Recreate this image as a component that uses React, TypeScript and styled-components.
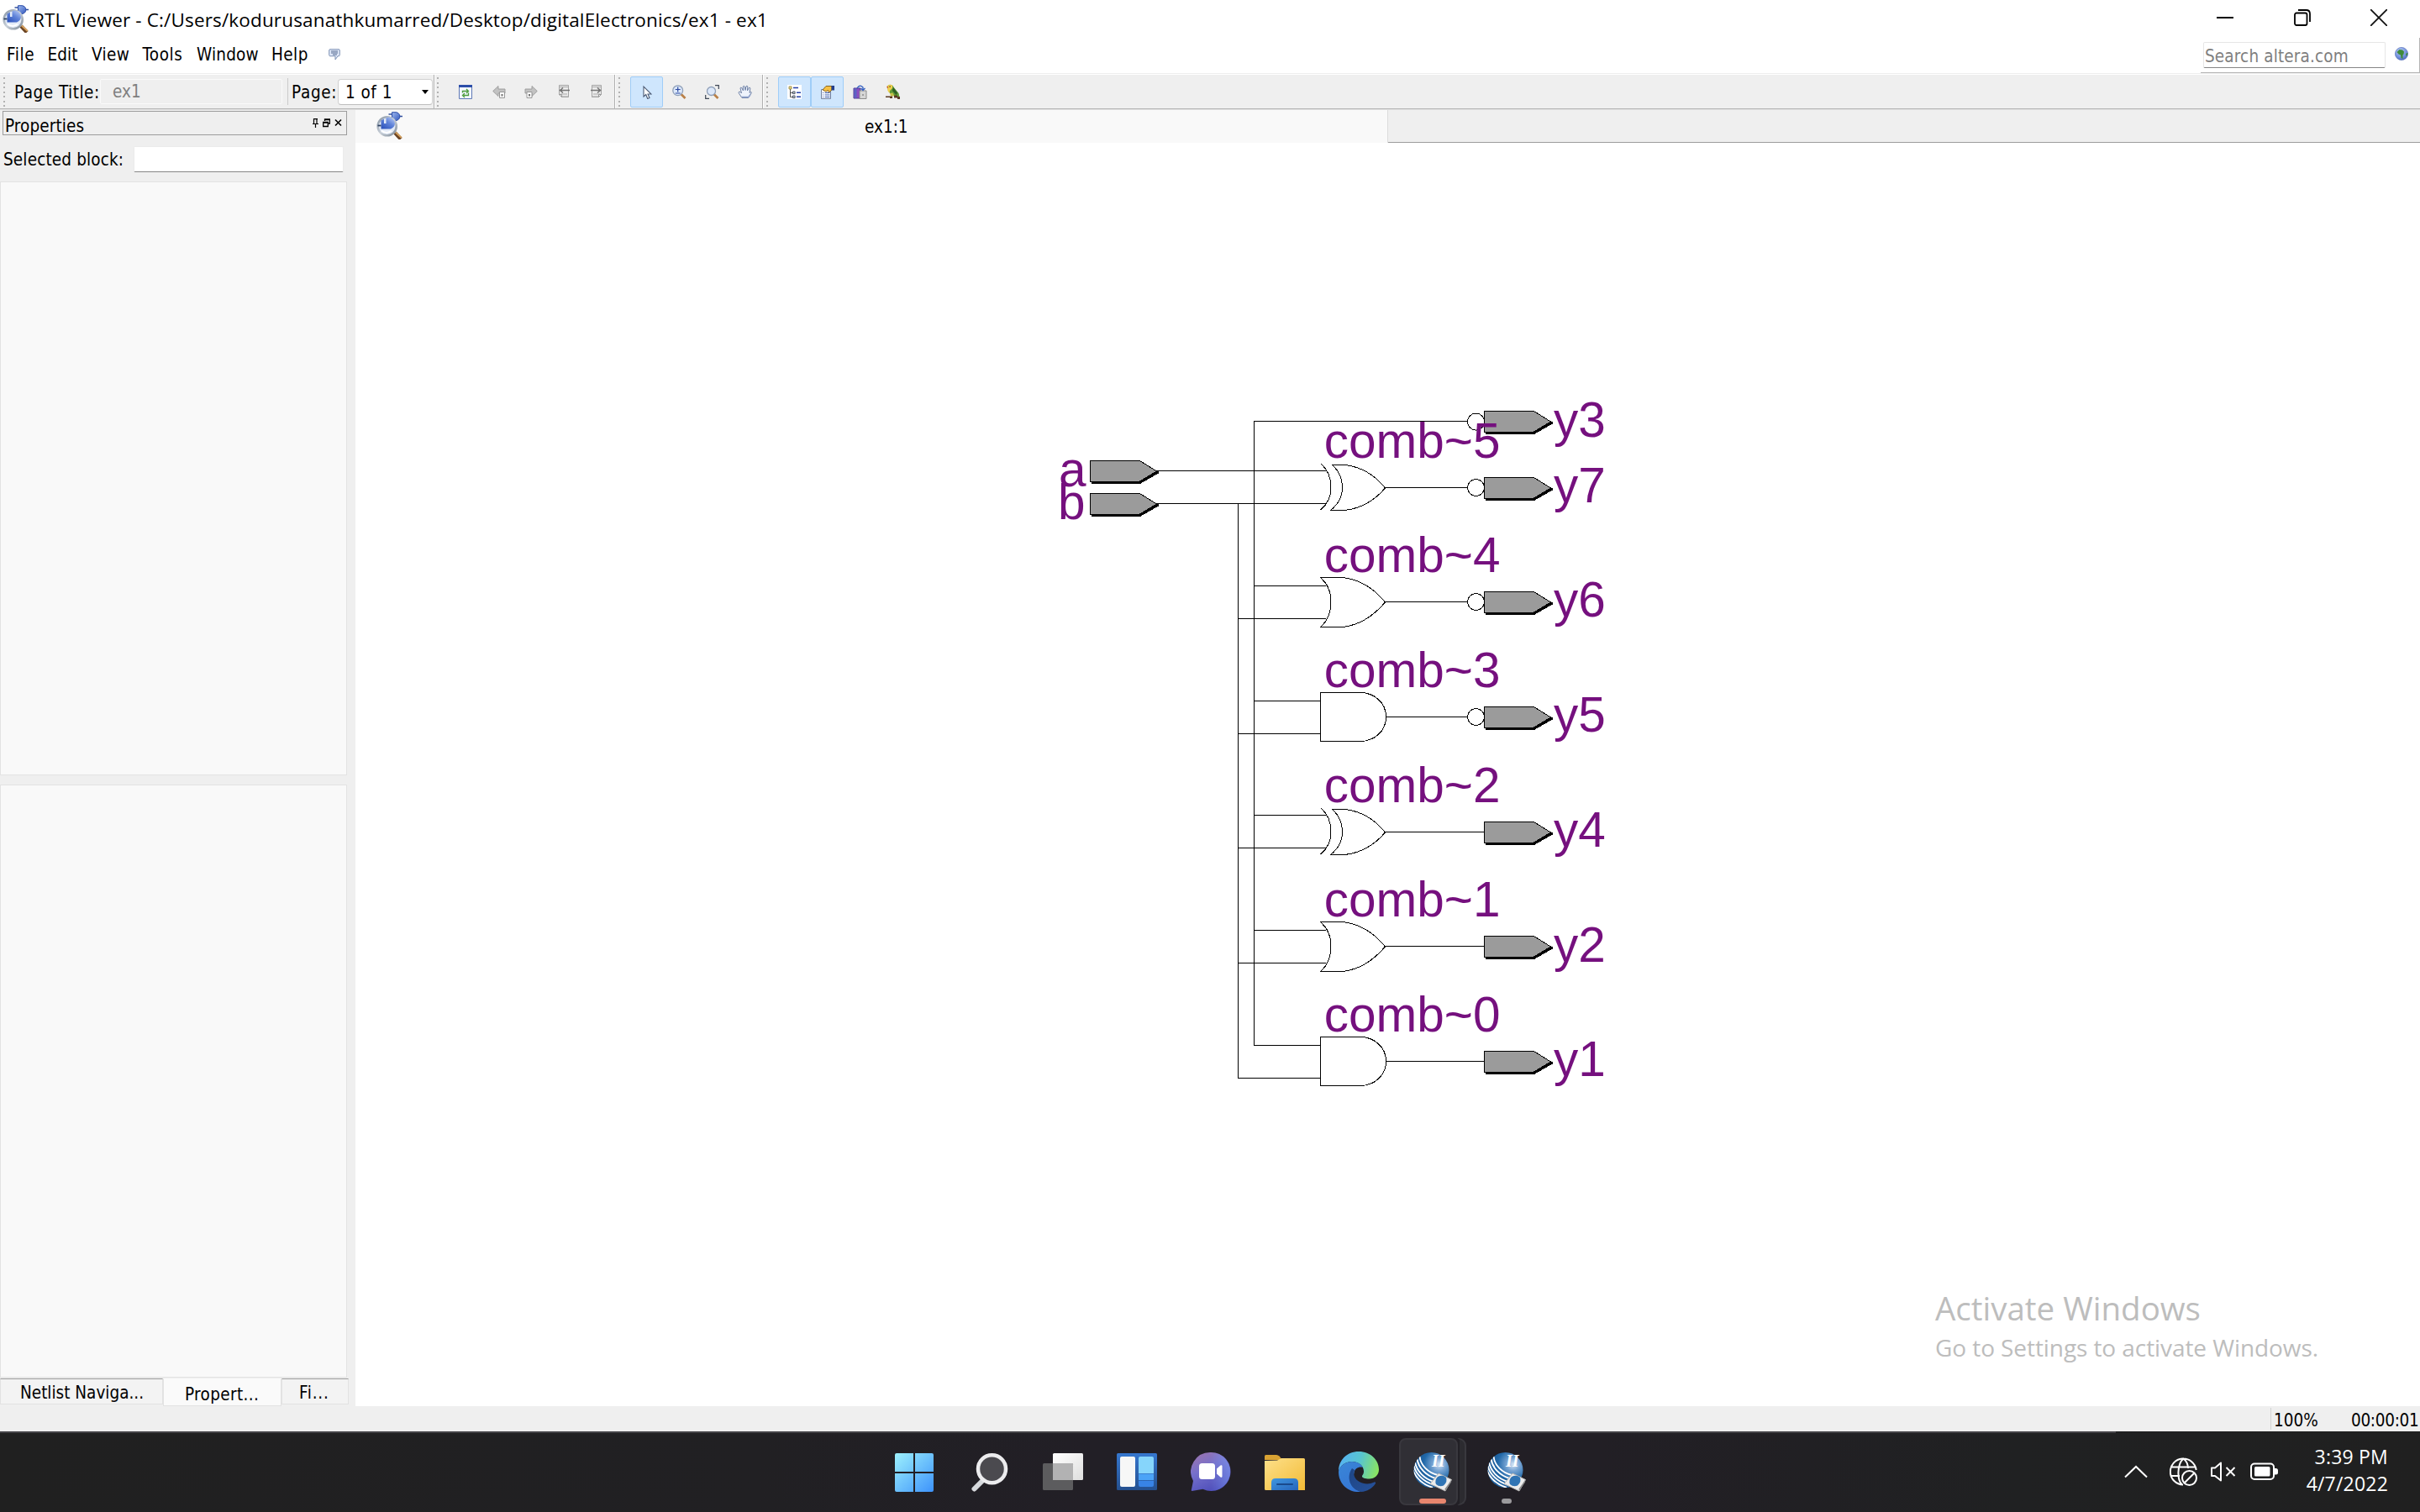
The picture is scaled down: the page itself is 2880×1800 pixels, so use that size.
import React from 'react';
import styled, { createGlobalStyle, css } from 'styled-components';

const GlobalStyle = createGlobalStyle`
  *, *::before, *::after { box-sizing: border-box; }
  body { margin: 0; background: #fff; overflow: hidden; }
`;

const uiFont = '"DejaVu Sans Condensed", "DejaVu Sans", sans-serif';
const shellFont = '"Open Sans", "Noto Sans", sans-serif';

const Screen = styled.div`
  width: 2880px;
  height: 1800px;
  display: flex;
  flex-direction: column;
  background: #fff;
  color: #000;
  font-family: ${uiFont};
  font-size: 20.5px;
  white-space: pre;
`;

const Label = styled.span<{ $track?: number; $color?: string }>`
  letter-spacing: ${(p) => p.$track ?? 0}px;
  color: ${(p) => p.$color ?? '#000'};
  line-height: 24px;
`;

/* ---------- title bar and menu ---------- */

const TitleBar = styled.header`
  height: 45px;
  display: flex;
  padding-left: 3px;
`;

const TitleIcon = styled.div`
  width: 36px;
  padding-top: 6px;
`;

const TitleText = styled.div`
  flex: 1;
  padding-top: 2px;
  font-family: ${shellFont};
  font-size: 22.5px;
  line-height: 43px;
  letter-spacing: 0.15px;
`;

const WindowButtons = styled.div`
  display: flex;
  width: 288px;
  height: 42px;
`;

const WindowButton = styled.div<{ $w: number }>`
  width: ${(p) => p.$w}px;
  display: flex;
  align-items: center;
  justify-content: center;
`;

const MenuBar = styled.nav`
  height: 42px;
  display: flex;
  padding-left: 8px;
`;

const MenuItems = styled.div`
  flex: 1;
  display: flex;
  align-items: center;
  padding-bottom: 3px;
`;

const MenuItem = styled.div<{ $w: number; $track: number }>`
  width: ${(p) => p.$w}px;
  letter-spacing: ${(p) => p.$track}px;
  line-height: 24px;
`;

const SearchArea = styled.div`
  width: 261px;
  display: flex;
  padding: 5px 0 0 3px;
  border-right: 1px solid #b4b4b4;
  border-bottom: 1px solid #b4b4b4;
`;

const SearchBox = styled.div`
  width: 217px;
  height: 31px;
  padding: 2px 0 0 1px;
  border: 1px solid #e6e6e6;
  border-bottom-color: #868686;
  border-radius: 2px;
  line-height: 28px;
`;

const SearchGlobe = styled.div`
  padding: 6px 0 0 11px;
  line-height: 0;
`;

/* ---------- toolbar ---------- */

const ToolBar = styled.div`
  height: 44px;
  display: flex;
  background: #efefef;
  border-top: 1px solid #eeeeee;
  border-bottom: 1px solid #e2e2e2;
  box-shadow: inset 0 1px 0 #fff, inset 0 -1px 0 #b4b4b4;
`;

const ToolGroup = styled.div<{ $w: number; $last?: boolean }>`
  width: ${(p) => p.$w}px;
  display: flex;
  align-items: center;
  margin: 1px 0;
  ${(p) =>
    !p.$last &&
    css`
      border-right: 1px solid #fff;
      box-shadow: inset -1px 0 0 #b0b0b0;
    `}
`;

const Grip = styled.div<{ $left: number; $right: number }>`
  width: 2px;
  height: 35px;
  flex: none;
  margin: 0 ${(p) => p.$right}px 0 ${(p) => p.$left}px;
  background: repeating-linear-gradient(#b2b2b2 0 2px, transparent 2px 5.5px);
`;

const ToolLabel = styled.div<{ $w: number; $track: number }>`
  width: ${(p) => p.$w}px;
  flex: none;
  padding-top: 1px;
  letter-spacing: ${(p) => p.$track}px;
  line-height: 24px;
`;

const PageTitleField = styled.div`
  width: 217px;
  height: 30px;
  flex: none;
  margin-right: 6px;
  padding-left: 14px;
  border: 1px solid #fafafa;
  border-radius: 2px;
  line-height: 29px;
`;

const Separator = styled.div`
  width: 1px;
  height: 32px;
  flex: none;
  background: #cacaca;
  margin-right: 4px;
`;

const PageSelect = styled.div`
  width: 113px;
  height: 31px;
  flex: none;
  display: flex;
  align-items: center;
  justify-content: space-between;
  padding: 1px 4px 0 8px;
  background: #fff;
  border: 1px solid #d0d0d0;
  border-bottom-color: #bdbdbd;
  border-radius: 4px;
`;

const Arrow = styled.div`
  border: 4px solid transparent;
  border-top: 5px solid #000;
  border-bottom: 0;
`;

const ToolButton = styled.div<{ $w: number; $on?: boolean }>`
  width: ${(p) => p.$w}px;
  height: 37px;
  flex: none;
  display: flex;
  align-items: center;
  justify-content: center;
  border: 1px solid ${(p) => (p.$on ? '#9fcdf8' : 'transparent')};
  border-radius: 2px;
  background: ${(p) => (p.$on ? '#cfe6fd' : 'transparent')};
`;

/* ---------- work area ---------- */

const WorkArea = styled.main`
  height: 1543px;
  display: flex;
  background: #efefef;
`;

const Dock = styled.aside`
  width: 423px;
  padding-top: 1px;
  display: flex;
  flex-direction: column;
`;

const DockTitle = styled.div`
  width: 410px;
  height: 29px;
  margin-left: 3px;
  padding: 0 5px 0 2px;
  display: flex;
  justify-content: space-between;
  border: 1px solid #9c9c9c;
`;

const DockCaption = styled.div`
  padding-top: 5px;
  line-height: 25px;
`;

const DockButtons = styled.div`
  display: flex;
  gap: 5px;
  padding-top: 8px;
`;

const BlockRow = styled.div`
  height: 55px;
  display: flex;
  align-items: center;
  padding: 1px 0 0 4px;
`;

const BlockLabel = styled.div`
  width: 155px;
  padding-top: 1px;
  letter-spacing: 0.15px;
`;

const BlockField = styled.div`
  width: 250px;
  height: 31px;
  background: #fff;
  border: 1px solid #ebebeb;
  border-bottom-color: #868686;
  border-radius: 2px;
`;

const EmptyPane = styled.div<{ $h: number }>`
  width: 413px;
  height: ${(p) => p.$h}px;
  background: #f9f9f9;
  border: 1px solid #e3e3e3;
`;

const PaneGap = styled.div`
  height: 11px;
`;

const DockTabs = styled.div`
  width: 415px;
  height: 33px;
  margin-top: 1px;
  display: flex;
  align-items: flex-start;
`;

const DockTab = styled.div<{ $w: number; $pad: number; $on?: boolean }>`
  width: ${(p) => p.$w}px;
  height: ${(p) => (p.$on ? 33 : 31)}px;
  padding-left: ${(p) => p.$pad}px;
  line-height: ${(p) => (p.$on ? 36 : 33)}px;
  background: ${(p) => (p.$on ? '#fafafa' : '#f3f3f3')};
  border: 1px solid #e2e2e2;
  border-top: 1px solid ${(p) => (p.$on ? '#fafafa' : '#9c9c9c')};
`;

const Viewer = styled.section`
  flex: 1;
  display: flex;
  flex-direction: column;
`;

const ViewerTabs = styled.div`
  height: 39px;
  display: flex;
`;

const ViewerTab = styled.div`
  width: 1229px;
  display: flex;
  padding: 2px 0 0 25px;
  background: #f9f9f9;
  border-right: 1px solid #dcdcdc;
`;

const ViewerTabText = styled.div`
  margin-left: 549px;
  line-height: 37px;
`;

const ViewerTabRest = styled.div`
  flex: 1;
  border-bottom: 1px solid #9c9c9c;
`;

const Canvas = styled.div`
  position: relative;
  flex: 1;
  background: #fff;
`;

const Schematic = styled.svg`
  display: block;
  width: 2457px;
  height: 1504px;
  font-family: "Liberation Sans", Arial, sans-serif;
  font-size: 58.5px;
`;

const Watermark = styled.div`
  position: absolute;
  left: 1880px;
  top: 1358px;
  font-family: ${shellFont};
  color: #bdbdbd;
`;

const WatermarkTitle = styled.div`
  font-size: 38.5px;
  line-height: 58px;
`;

const WatermarkText = styled.div`
  font-size: 28px;
  line-height: 36px;
  letter-spacing: -0.08px;
`;

const StatusBar = styled.footer`
  height: 30px;
  display: flex;
  justify-content: flex-end;
  align-items: center;
  background: #efefef;
`;

const Zoom = styled.div`
  width: 96px;
  height: 26px;
  padding-left: 3px;
  border-left: 1px solid #d2d2d2;
  line-height: 30px;
`;

const Elapsed = styled.div`
  width: 82px;
  height: 26px;
  line-height: 30px;
  letter-spacing: -0.3px;
`;

/* ---------- taskbar ---------- */

const TaskBar = styled.footer`
  height: 96px;
  display: flex;
  background: linear-gradient(90deg, #202020 0, #212023 900px, #221f26 1300px, #221f25 1900px, #202122 2400px, #202020 2880px);
`;

const TaskEdge = styled.div`
  display: flex;
  width: 2518px;
  border-top: 2px solid #434246;
  padding-left: 1045px;
`;

const TaskButton = styled.div`
  position: relative;
  width: 88px;
  height: 94px;
  flex: none;
  display: flex;
  justify-content: center;
  padding-top: 22px;
`;

const ActiveBack = styled.div`
  position: absolute;
  left: 4px;
  top: 6px;
  width: 70px;
  height: 80px;
  border-radius: 8px;
  background: #302f35;
  border: 2px solid #39383e;
`;

const ActiveStack = styled.div`
  position: absolute;
  left: 73px;
  top: 6px;
  width: 11px;
  height: 80px;
  border-radius: 0 9px 9px 0;
  background: #2c2b30;
  border: 2px solid #39383e;
  border-left: 3px solid #222026;
`;

const Indicator = styled.div<{ $w: number; $color: string }>`
  position: absolute;
  left: ${(p) => 44 - p.$w / 2}px;
  top: 78px;
  width: ${(p) => p.$w}px;
  height: 6px;
  border-radius: 3px;
  background: ${(p) => p.$color};
`;

const TaskGlyph = styled.svg`
  position: relative;
  width: 48px;
  height: 48px;
`;

const Tray = styled.div`
  flex: 1;
  display: flex;
  align-items: center;
  padding-left: 9px;
`;

const TrayIcon = styled.div<{ $w: number }>`
  width: ${(p) => p.$w}px;
  flex: none;
  display: flex;
`;

const Clock = styled.div`
  width: 111px;
  padding-bottom: 4px;
  font-family: ${shellFont};
  font-size: 23px;
  line-height: 32px;
  letter-spacing: 0.2px;
  color: #fff;
  text-align: right;
`;

/* ---------- drawings ---------- */

const AppGlyph = () => (
  <svg width="32" height="33" viewBox="0 0 32 33">
    <defs>
      <linearGradient id="gateFill" x1="0" y1="0" x2="1" y2="1">
        <stop offset="0" stopColor="#9db8ee" />
        <stop offset="1" stopColor="#3458bd" />
      </linearGradient>
      <linearGradient id="ringFill" x1="0" y1="0" x2="1" y2="1">
        <stop offset="0" stopColor="#8795a5" />
        <stop offset="0.5" stopColor="#c9d0d8" />
        <stop offset="1" stopColor="#7d8a98" />
      </linearGradient>
      <linearGradient id="blockFill" x1="1" y1="0" x2="0.2" y2="1">
        <stop offset="0" stopColor="#c3d3f7" />
        <stop offset="0.5" stopColor="#6285da" />
        <stop offset="1" stopColor="#2f55bd" />
      </linearGradient>
    </defs>
    <path d="M14.500 3H19M15 8.500h4M26 5.500h5" stroke="#34529f" strokeWidth="1.4" />
    <path d="M18.500 .7h4.500a4.900 4.900 0 0 1 0 9.800h-4.500z" fill="url(#gateFill)" stroke="#2c4da8" />
    <path d="M22 25l7 7.500" stroke="#6b4424" strokeWidth="4.400" />
    <path d="M22.800 24.500l7 6.500" stroke="#d5a05c" strokeWidth="1.800" />
    <circle cx="12.700" cy="17.300" r="11" fill="#e3ebf8" stroke="url(#ringFill)" strokeWidth="2.600" />
    <path d="M5.500 10.500v10h11.500q5-2.500 5-6.500-.5-6-7-7.500-3 0-3.500 1v6.500H9v-5.500z" fill="url(#blockFill)" />
    <path d="M1.500 16.500h4" stroke="#2c4060" strokeWidth="1.800" />
    <path d="M6 22.800q6 4 12 0" stroke="#fff" strokeWidth="1.800" fill="none" />
  </svg>
);

const CommentGlyph = () => (
  <svg width="14" height="14" viewBox="0 0 14 14">
    <path d="M2 .7h10q1.300 0 1.300 1.300v5.500q0 1.300-1.300 1.300h-1L8 13V8.800H2Q.7 8.800.7 7.500V2Q.7.7 2 .7z" fill="#dde6f7" stroke="#8093b5" />
    <path d="M3 3h8M3 5h8M5 7h5" stroke="#54698f" />
  </svg>
);

const MiniGlobe = () => (
  <svg width="16" height="16" viewBox="0 0 16 16">
    <defs>
      <radialGradient id="sea" cx="0.4" cy="0.3" r="0.8">
        <stop offset="0" stopColor="#b9cdf6" />
        <stop offset="0.6" stopColor="#7391dc" />
        <stop offset="1" stopColor="#3d5cae" />
      </radialGradient>
    </defs>
    <circle cx="8" cy="8" r="7.600" fill="url(#sea)" stroke="#5b76bb" strokeWidth="0.7" />
    <path d="M2.500 6l3-3 3.500.500 2 2-.500 3-1 1v4.500l-2-1-.500-3.500-2.500-1z" fill="#3f8a3a" />
    <path d="M14 7l1.500.500-1 3-1.500-1z" fill="#3f8a3a" />
  </svg>
);

const RefreshGlyph = () => (
  <svg width="16" height="17" viewBox="0 0 16 17">
    <path d="M.5.5h15v16H.5z" fill="#f3f7ff" stroke="#6079b5" />
    <path d="M0 0h16v3H0z" fill="#2c4ea8" />
    <path d="M4.500 9.500V7.500h6M9 5l2.500 2.500L9 10M11.500 9.500v3h-6M7 10l-2.500 2.500L7 15" fill="none" stroke="#4d9c3b" strokeWidth="1.300" />
  </svg>
);

const StepGlyph = ({ forward }: { forward?: boolean }) => (
  <svg width="16" height="17" viewBox="0 0 16 17">
    <g transform={forward ? 'matrix(-1 0 0 1 16 0)' : undefined}>
      <path d="M.7 7.500L7 1.500V5h8v5H7v3.500z" fill="#c2c2c2" stroke="#999" strokeWidth="0.900" />
    </g>
    <g transform={forward ? 'translate(-5.500 0)' : undefined}>
      <path d="M8.500 8.500h6v7h-6z" fill="#fafafa" stroke="#989898" />
      <path d="M10.500 11h2v2.500h-2z" fill="#777" />
    </g>
  </svg>
);

const SheetGlyph = ({ forward }: { forward?: boolean }) => (
  <svg width="15" height="16" viewBox="0 0 15 16">
    <g transform={forward ? 'matrix(-1 0 0 1 15 0)' : undefined}>
      <path d="M1.500.5h11v14H4.500l-3-3z" fill="#ececec" stroke="#a3a3a3" />
      <path d="M1 2.500h12M3 11h8M5 14h8" stroke="#a8a8a8" />
      <path d="M14 6.500H3M6 3.500l-3.500 3L6 9.500" fill="none" stroke="#737373" strokeWidth="1.500" />
      <path d="M1.500 11.500h3v3z" fill="#fff" stroke="#999" />
    </g>
  </svg>
);

const PointerGlyph = () => (
  <svg width="12" height="17" viewBox="0 0 12 17">
    <path d="M2 2v12l2.700-2.500 2 5 2.300-1-2-4.500H11z" fill="#fff" stroke="#4c5a74" strokeWidth="1.100" />
  </svg>
);

const ZoomGlyph = ({ fit }: { fit?: boolean }) => (
  <svg width="17" height="17" viewBox="0 0 17 17">
    <path d="M10.500 11l5 5" stroke="#b98048" strokeWidth="2.600" />
    <circle cx={fit ? 7.5 : 6.7} cy={fit ? 7.5 : 6.7} r={fit ? 5 : 5.9} fill="#dce8fa" stroke="#8f9fb8" strokeWidth="1.300" />
    {fit ? (
      <path d="M12 .7h4.300V5M.7 12v4.300H5" fill="none" stroke="#3f4856" strokeWidth="1.200" />
    ) : (
      <path d="M3.700 5.500h6M6.700 2.500v6M3.700 10h6" stroke="#2d49a0" strokeWidth="1.200" />
    )}
  </svg>
);

const HandGlyph = () => (
  <svg width="17" height="17" viewBox="0 0 17 17">
    <path
      d="M5 15.500L1 9.500Q1 7.500 3 8.500L4.500 10 3 4q.300-1.500 1.700-.5L6.500 7 6.300 2q.700-1.500 1.900 0L9 6.500l1-4.800q1.200-1.200 1.800.3L11.500 7l1.800-3.500q1.400-.8 1.600.6L14 9.500l1.500-1.200q1.300.2.500 1.700l-3.500 5.500z"
      fill="#eef3fc"
      stroke="#7082a6"
      strokeWidth="1"
    />
    <path d="M5 14.500h8l2-3" stroke="#8fa2cc" strokeWidth="1.600" fill="none" />
  </svg>
);

const TreeGlyph = () => (
  <svg width="17" height="17" viewBox="0 0 17 17">
    <path d="M0 0h17v17H0z" fill="#fff" />
    <path d="M3.500 5v9.500h3M3.500 9.500h3" fill="none" stroke="#444" strokeWidth="0.900" />
    <path d="M2 2h3v3H2z" fill="#f3df8c" stroke="#8b7d3a" strokeWidth="0.800" />
    <path d="M6.500 8h2.600v2.600H6.500zM6.500 13h2.600v2.600H6.500z" fill="#bfd8c4" stroke="#335" strokeWidth="0.800" />
    <path d="M7 3.500h6M11 9.300h5M11 14.300h5" stroke="#2540a8" strokeWidth="1.400" />
  </svg>
);

const PropertiesGlyph = () => (
  <svg width="17" height="17" viewBox="0 0 17 17">
    <path d="M1.500 5.500h11v11h-11z" fill="#fdfdff" stroke="#6f7f9f" />
    <path d="M3 9.500h1M5.500 9.500h6M3 12h1M5.500 12h6M3 14.500h1M5.500 14.500h6" stroke="#3557a8" />
    <path d="M3 6l4-4.500h7V6l-3.500 3-1-2.500L7 8z" fill="#f6c044" stroke="#7c5716" strokeWidth="0.900" />
    <path d="M13.500 1H17v5.500h-3.500z" fill="#24408f" />
  </svg>
);

const PaneGlyph = () => (
  <svg width="17" height="17" viewBox="0 0 17 17">
    <path d="M1 4h8v12H1z" fill="#8a4cc0" stroke="#4b3f94" />
    <path d="M1.500 4.500h3v11h-3z" fill="#5b63c4" />
    <path d="M8 7h8v9.500H8z" fill="#d6d6d6" stroke="#8c8c8c" />
    <path d="M5 4q3-5 7-1v3M9.500 4L12 6.500 14.500 4" fill="none" stroke="#3560c0" strokeWidth="1.300" />
    <path d="M11 12h2" stroke="#666" />
  </svg>
);

const BirdGlyph = () => (
  <svg width="17" height="18" viewBox="0 0 17 18">
    <path d="M2 2.500Q4-.5 8 1.500L10.500 5l5 6 1 4.500-3.500-1-5.500-1-4.500-5z" fill="#5e9a37" />
    <path d="M2 2.500Q4-.5 8 1.500L8 5 5 8l-.5 3L2.500 8z" fill="#f0d04c" />
    <path d="M9 4l5 6.500-1.500 2.500L8 8z" fill="#2f5e25" />
    <path d="M1.300 2.500l2 1-1.300 2z" fill="#c04a22" />
    <path d="M5 11l3.500-.5 2 4H6z" fill="#c7c24a" />
    <path d="M0 14.500h8v2.500H5v-1H0zM10 13.500h4v1.500h3v3h-3v-1.500h-4z" fill="#5a3a24" />
    <path d="M4.500 2.500h1.200v1.200H4.500z" fill="#222" />
  </svg>
);

const GlyphPin = () => (
  <svg width="7" height="11" viewBox="0 0 7 11">
    <path d="M1 .6h5M1.500 0v6.500M5 0v6.500M0 6.500h7M3.500 6.500V11" fill="none" stroke="#000" strokeWidth="1.200" />
  </svg>
);

const GlyphFloat = () => (
  <svg width="9" height="11" viewBox="0 0 9 11">
    <path d="M2.500 3V1h6v5H7M2.500 1.600h6M.7 4.500h5.600v5H.7zM.7 5.200h5.600" fill="none" stroke="#000" strokeWidth="1.300" />
  </svg>
);

const GlyphClose = () => (
  <svg width="9" height="11" viewBox="0 0 9 11">
    <path d="M1 1.500l7 7M8 1.500l-7 7" stroke="#000" strokeWidth="1.600" />
  </svg>
);

const WIRE = { fill: 'none', stroke: '#000', strokeWidth: 1 } as const;

const Pin = ({ x, y }: { x: number; y: number }) => (
  <g>
    <path d={`M${x + 1.5} ${y + 15}H${x + 60}L${x + 81} ${y + 3}V${y}L${x + 58} ${y + 9}H${x + 1.5}z`} fill="#000" />
    <path d={`M${x} ${y - 12}h59l20 12.500-20 12h-59z`} fill="#9b9b9b" stroke="#000" />
  </g>
);

type GateKind = 'and' | 'or' | 'xor';

const gatePath: Record<GateKind, string> = {
  and: 'M0 -29H47C64 -29 78 -17 78 0S64 29 47 29H0z',
  or: 'M0 -29H26C45 -27 62 -18 77 .500C62 18 45 28 26 30H0C9 22 12.500 11 12.500 0S9 -21 0 -29z',
  xor: 'M1 -28C9 -21 12.500 -11 12.500 0S9 19 0 26.500M14 -27H29C46 -25 63 -17 77 .500C63 17 46 25 29 27H12C22 19 26 10 26 0S22 -20 14 -27z',
};

const Gate = ({ kind, y }: { kind: GateKind; y: number }) => (
  <path d={gatePath[kind]} transform={`translate(1571.5 ${y})`} {...WIRE} />
);

const gates: { name: string; kind: GateKind; out: string; y: number; inverted: boolean; text: number }[] = [
  { name: 'comb~5', kind: 'xor', out: 'y7', y: 580.5, inverted: true, text: 598 },
  { name: 'comb~4', kind: 'or', out: 'y6', y: 716.5, inverted: true, text: 734 },
  { name: 'comb~3', kind: 'and', out: 'y5', y: 853.5, inverted: true, text: 871 },
  { name: 'comb~2', kind: 'xor', out: 'y4', y: 990.5, inverted: false, text: 1008 },
  { name: 'comb~1', kind: 'or', out: 'y2', y: 1126.5, inverted: false, text: 1145 },
  { name: 'comb~0', kind: 'and', out: 'y1', y: 1263.5, inverted: false, text: 1281 },
];

const Circuit = () => (
  <Schematic viewBox="423 170 2457 1504">
    <g shapeRendering="crispEdges">
      <path d="M1746 501.5H1492.5V1244.5H1571M1473.5 599.5V1283.5H1571M1376 560.5H1578M1376 599.5H1578" {...WIRE} />
      <circle cx="1756.500" cy="502" r="10" fill="#fff" stroke="#000" />
      <Pin x={1766.5} y={501.5} />
      <Pin x={1297.5} y={560.5} />
      <Pin x={1297.5} y={599.5} />
      {gates.map((g, i) => {
        const reach = g.kind === 'and' ? 1571 : 1578;
        const branch = i > 0 && i < 5;
        const lower = g.name === 'comb~2' ? 19 : 20;
        const upper = g.name === 'comb~2' ? 20 : 19;
        return (
          <g key={g.name}>
            {branch && <path d={`M1492.500 ${g.y - upper}H${reach}M1473.500 ${g.y + lower}H${reach}`} {...WIRE} />}
            <Gate kind={g.kind} y={g.y} />
            <path d={`M1649 ${g.y}H${g.inverted ? 1746 : 1766}`} {...WIRE} />
            {g.inverted && <circle cx="1756.500" cy={g.y} r="10" fill="#fff" stroke="#000" />}
            <Pin x={1766.5} y={g.y} />
          </g>
        );
      })}
    </g>
    <g fill="#75107e">
      <text x="1260" y="578.500">a</text>
      <text x="1259" y="617.500">b</text>
      <text x="1849" y="520">y3</text>
      {gates.map((g) => (
        <g key={g.name}>
          <text x="1575.700" y={g.y - 36}>{g.name}</text>
          <text x="1849" y={g.text}>{g.out}</text>
        </g>
      ))}
    </g>
  </Schematic>
);

const StartGlyph = () => (
  <TaskGlyph viewBox="0 0 48 48">
    <defs>
      <linearGradient id="start" x1="1" y1="1" x2="47" y2="47" gradientUnits="userSpaceOnUse">
        <stop offset="0" stopColor="#9df1fd" />
        <stop offset="1" stopColor="#3d93fb" />
      </linearGradient>
    </defs>
    <path d="M2 2h20v22H0V4q0-2 2-2zM24 2h20q2 0 2 2v20H24zM0 26h22v22H2q-2 0-2-2zM24 26h22v20q0 2-2 2H24z" fill="url(#start)" />
  </TaskGlyph>
);

const SearchGlyph = () => (
  <TaskGlyph viewBox="0 0 48 48">
    <path d="M17 34L6.500 44.500" stroke="#d6d9dd" strokeWidth="6" strokeLinecap="round" />
    <circle cx="27.500" cy="20.700" r="16.500" fill="#4b4a4f" stroke="#ececee" strokeWidth="4.500" />
  </TaskGlyph>
);

const TaskViewGlyph = () => (
  <TaskGlyph viewBox="0 0 48 48">
    <defs>
      <linearGradient id="pane" x1="0" y1="0" x2="1" y2="1">
        <stop offset="0" stopColor="#fff" />
        <stop offset="1" stopColor="#dedede" />
      </linearGradient>
    </defs>
    <rect x="12" y="2" width="36" height="32" rx="1.500" fill="url(#pane)" />
    <rect x="0" y="14" width="36" height="32" rx="1.500" fill="#5c5c5e" />
    <rect x="12" y="14" width="24" height="20" fill="#b2b2b3" />
  </TaskGlyph>
);

const WidgetsGlyph = () => (
  <TaskGlyph viewBox="0 0 48 48">
    <defs>
      <linearGradient id="board" x1="0" y1="0" x2="0" y2="1">
        <stop offset="0" stopColor="#3577cf" />
        <stop offset="1" stopColor="#25508f" />
      </linearGradient>
    </defs>
    <rect x="0" y="2" width="48" height="44" rx="1.500" fill="url(#board)" />
    <rect x="4" y="6" width="18" height="36" rx="2" fill="#f7f7f7" />
    <path d="M26 8q0-2 2-2h14q2 0 2 2v18H26z" fill="#86d5fb" />
    <path d="M26 26.500h18V34H26z" fill="#4ba3f7" />
    <path d="M26 34.700h18V40q0 2-2 2H28q-2 0-2-2z" fill="#3883e6" />
  </TaskGlyph>
);

const ChatGlyph = () => (
  <TaskGlyph viewBox="0 0 48 48">
    <defs>
      <linearGradient id="bubble" x1="0.200" y1="0" x2="0.700" y2="1">
        <stop offset="0" stopColor="#9a73b0" />
        <stop offset="0.400" stopColor="#7570cb" />
        <stop offset="1" stopColor="#4a4bb8" />
      </linearGradient>
      <linearGradient id="bubbleLight" x1="0" y1="0" x2="1" y2="0">
        <stop offset="0.500" stopColor="#7f9cf5" stopOpacity="0" />
        <stop offset="1" stopColor="#7f9cf5" stopOpacity="0.600" />
      </linearGradient>
    </defs>
    <path d="M24 1a23 23 0 1 1-9.500 43.700L1.500 47q-1-.5-.5-2l2-10A23 23 0 0 1 24 1z" fill="url(#bubble)" />
    <circle cx="24" cy="24" r="23" fill="url(#bubbleLight)" />
    <rect x="10" y="14" width="19" height="19" rx="3.500" fill="#fff" />
    <path d="M31 20.500l4.500-4q2-1 2 1v12q0 2-2 1l-4.500-4z" fill="#fff" />
  </TaskGlyph>
);

const FolderGlyph = () => (
  <TaskGlyph viewBox="0 0 48 48">
    <defs>
      <linearGradient id="folder" x1="0" y1="0" x2="1" y2="1">
        <stop offset="0" stopColor="#fde08a" />
        <stop offset="1" stopColor="#f3bb36" />
      </linearGradient>
      <linearGradient id="folderBlue" x1="0" y1="0" x2="1" y2="1">
        <stop offset="0" stopColor="#3f97e0" />
        <stop offset="1" stopColor="#2764bb" />
      </linearGradient>
    </defs>
    <path d="M0 5.500Q0 4 1.500 4H14q2 0 3.500 1.500L21 10H0z" fill="#d9a233" />
    <path d="M0 11l15-.500L20 8h26.500Q48 8 48 9.500V46H1.500Q0 46 0 44.500z" fill="url(#folder)" />
    <path d="M8 46V37q0-5 5-5h22q5 0 5 5v9z" fill="url(#folderBlue)" />
    <path d="M15 39h18" stroke="#1a4a8c" strokeWidth="2" strokeLinecap="round" />
  </TaskGlyph>
);

const EdgeGlyph = () => (
  <TaskGlyph viewBox="0 0 48 48">
    <defs>
      <linearGradient id="edgeTop" x1="0" y1="0.400" x2="1" y2="0.600">
        <stop offset="0" stopColor="#55b2f3" />
        <stop offset="0.500" stopColor="#58c5cf" />
        <stop offset="1" stopColor="#8be560" />
      </linearGradient>
      <linearGradient id="edgeBody" x1="0" y1="0" x2="0.600" y2="1">
        <stop offset="0" stopColor="#3a86d6" />
        <stop offset="1" stopColor="#3576d6" />
      </linearGradient>
      <linearGradient id="edgeWave" x1="0" y1="0" x2="1" y2="1">
        <stop offset="0" stopColor="#1d4585" />
        <stop offset="1" stopColor="#27519a" />
      </linearGradient>
    </defs>
    <path d="M24 0C38 0 48 10 48 21.500 48 28 43 32.500 36.500 32.500c-5 0-8.500-1.200-8.500-3 0-1.500 2-2 2-6C30 17 24 12 16 12 8 12 1 17.500 0 24 0 10 10 0 24 0z" fill="url(#edgeTop)" />
    <path d="M0 24C1 17 8 12 16 12c6.500 0 11 3 13 7-4-1.500-10 .5-10.500 6.500C15 35 16 44 27 48 12 49.500 0 39 0 24z" fill="url(#edgeBody)" />
    <path d="M16 20C9 30 13 45 27 48c7-.5 13-4 17-10 .5-1-.5-2-1.500-1.500C33 41 22 37 19 30c-1-3-1-5 0-8z" fill="url(#edgeWave)" />
  </TaskGlyph>
);

const QuartusGlyph = () => (
  <TaskGlyph viewBox="0 0 48 48">
    <defs>
      <radialGradient id="ball" cx="0.720" cy="0.340" r="0.550">
        <stop offset="0" stopColor="#d3e2f4" />
        <stop offset="0.350" stopColor="#76a3d2" />
        <stop offset="0.800" stopColor="#2169a9" />
        <stop offset="1" stopColor="#1d5f9d" />
      </radialGradient>
      <clipPath id="ballClip">
        <circle cx="22.500" cy="22" r="21" />
      </clipPath>
    </defs>
    <circle cx="22.500" cy="22" r="21" fill="url(#ball)" />
    <g clipPath="url(#ballClip)" fill="none" stroke="#fff" strokeWidth="1.900">
      <path d="M8.500 6C9.500 16 18 25 30 28" />
      <path d="M5.500 9C7 19 16 29 28 32" />
      <path d="M3 13C5 23 14 33 26 36" />
      <path d="M1.500 17C4 27 13 36 25 39.500" />
      <path d="M.5 22C4 31 12 39 24 43" />
    </g>
    <path d="M31 26l15.500 7.500-7.500 13.500-18-8.500z" fill="#ececec" stroke="#b4b4b4" />
    <path d="M46.500 33.500l-.500 3-7 10.500-.500-2.500z" fill="#8a8a8a" />
    <path d="M30 30q6-3 10 1 2 5-3 9.500-5 2-9-1.500-2-5 2-9z" fill="#2f74b4" />
    <text x="23" y="18" fontFamily="Liberation Serif, serif" fontSize="20" fontWeight="700" fontStyle="italic" fill="#fff">II</text>
  </TaskGlyph>
);

const menu: [string, number, number][] = [
  ['File', 48.5, 0.6],
  ['Edit', 52.5, 0.1],
  ['View', 60.5, 0.35],
  ['Tools', 64.5, 0.55],
  ['Window', 89, 0.2],
  ['Help', 68, 0.45],
];

export default function App() {
  return (
    <Screen>
      <GlobalStyle />
      <TitleBar>
        <TitleIcon><AppGlyph /></TitleIcon>
        <TitleText>RTL Viewer - C:/Users/kodurusanathkumarred/Desktop/digitalElectronics/ex1 - ex1</TitleText>
        <WindowButtons>
          <WindowButton $w={112}>
            <svg width="20" height="2"><path d="M0 1h20" stroke="#000" strokeWidth="2" /></svg>
          </WindowButton>
          <WindowButton $w={72}>
            <svg width="20" height="20" viewBox="0 0 20 20" fill="none" stroke="#000" strokeWidth="1.800">
              <rect x="1" y="4.500" width="14.500" height="14.500" rx="2" />
              <path d="M5 1h9.500q4.500 0 4.500 4.500V15" />
            </svg>
          </WindowButton>
          <WindowButton $w={104}>
            <svg width="20" height="20" transform="translate(3 0)"><path d="M0 0l20 20M20 0L0 20" stroke="#111" strokeWidth="1.800" /></svg>
          </WindowButton>
        </WindowButtons>
      </TitleBar>
      <MenuBar>
        <MenuItems>
          {menu.map(([text, w, track]) => (
            <MenuItem key={text} $w={w} $track={track}>{text}</MenuItem>
          ))}
          <CommentGlyph />
        </MenuItems>
        <SearchArea>
          <SearchBox><Label $track={0.15} $color="#7f7f7f">Search altera.com</Label></SearchBox>
          <SearchGlobe><MiniGlobe /></SearchGlobe>
        </SearchArea>
      </MenuBar>
      <ToolBar>
        <ToolGroup $w={518}>
          <Grip $left={4} $right={11} />
          <ToolLabel $w={102} $track={0.5}>Page Title:</ToolLabel>
          <PageTitleField><Label $color="#7f7f7f">ex1</Label></PageTitleField>
          <Separator />
          <ToolLabel $w={55} $track={0.7}>Page:</ToolLabel>
          <PageSelect>
            <Label $track={0.5}>1 of 1</Label>
            <Arrow />
          </PageSelect>
        </ToolGroup>
        <ToolGroup $w={215}>
          <Grip $left={2} $right={13} />
          <ToolButton $w={38}><RefreshGlyph /></ToolButton>
          <ToolButton $w={41}><StepGlyph /></ToolButton>
          <ToolButton $w={36}><StepGlyph forward /></ToolButton>
          <ToolButton $w={43}><SheetGlyph /></ToolButton>
          <ToolButton $w={33}><SheetGlyph forward /></ToolButton>
        </ToolGroup>
        <ToolGroup $w={176}>
          <Grip $left={3} $right={12} />
          <ToolButton $w={39} $on><PointerGlyph /></ToolButton>
          <ToolButton $w={39}><ZoomGlyph /></ToolButton>
          <ToolButton $w={39}><ZoomGlyph fit /></ToolButton>
          <ToolButton $w={39}><HandGlyph /></ToolButton>
        </ToolGroup>
        <ToolGroup $w={400} $last>
          <Grip $left={3} $right={12} />
          <ToolButton $w={39} $on><TreeGlyph /></ToolButton>
          <ToolButton $w={39} $on><PropertiesGlyph /></ToolButton>
          <ToolButton $w={38}><PaneGlyph /></ToolButton>
          <ToolButton $w={40}><BirdGlyph /></ToolButton>
        </ToolGroup>
      </ToolBar>
      <WorkArea>
        <Dock>
          <DockTitle>
            <DockCaption><Label $track={0.1}>Properties</Label></DockCaption>
            <DockButtons>
              <GlyphPin />
              <GlyphFloat />
              <GlyphClose />
            </DockButtons>
          </DockTitle>
          <BlockRow>
            <BlockLabel>Selected block:</BlockLabel>
            <BlockField />
          </BlockRow>
          <EmptyPane $h={707} />
          <PaneGap />
          <EmptyPane $h={706} />
          <DockTabs>
            <DockTab $w={194} $pad={23}>Netlist Naviga...</DockTab>
            <DockTab $w={141} $pad={25} $on><Label $track={0.35}>Propert...</Label></DockTab>
            <DockTab $w={80} $pad={20}><Label $track={0.75}>Fi...</Label></DockTab>
          </DockTabs>
        </Dock>
        <Viewer>
          <ViewerTabs>
            <ViewerTab>
              <AppGlyph />
              <ViewerTabText>ex1:1</ViewerTabText>
            </ViewerTab>
            <ViewerTabRest />
          </ViewerTabs>
          <Canvas>
            <Circuit />
            <Watermark>
              <WatermarkTitle>Activate Windows</WatermarkTitle>
              <WatermarkText>Go to Settings to activate Windows.</WatermarkText>
            </Watermark>
          </Canvas>
        </Viewer>
      </WorkArea>
      <StatusBar>
        <Zoom>100%</Zoom>
        <Elapsed>00:00:01</Elapsed>
      </StatusBar>
      <TaskBar>
        <TaskEdge>
          <TaskButton><StartGlyph /></TaskButton>
          <TaskButton><SearchGlyph /></TaskButton>
          <TaskButton><TaskViewGlyph /></TaskButton>
          <TaskButton><WidgetsGlyph /></TaskButton>
          <TaskButton><ChatGlyph /></TaskButton>
          <TaskButton><FolderGlyph /></TaskButton>
          <TaskButton><EdgeGlyph /></TaskButton>
          <TaskButton>
            <ActiveStack />
            <ActiveBack />
            <QuartusGlyph />
            <Indicator $w={32} $color="#e8866e" />
          </TaskButton>
          <TaskButton>
            <QuartusGlyph />
            <Indicator $w={12} $color="#9b9a9d" />
          </TaskButton>
        </TaskEdge>
        <Tray>
          <TrayIcon $w={55}>
            <svg width="30" height="16" viewBox="0 0 30 16"><path d="M2 14.500L15 2l13 12.500" fill="none" stroke="#fff" strokeWidth="2" /></svg>
          </TrayIcon>
          <TrayIcon $w={48}>
            <svg width="34" height="34" viewBox="0 0 34 34" fill="none" stroke="#fff" strokeWidth="2">
              <path d="M16 32.500A15.500 15.500 0 1 1 31.700 15M2.500 11.500h29M2.500 22H12M14.500 32C9 27 8.500 8 16.500 1.500 20 4 21.800 9 22 13" />
              <circle cx="23.500" cy="24.500" r="8.500" />
              <path d="M17.500 30.500l12-12" />
            </svg>
          </TrayIcon>
          <TrayIcon $w={48}>
            <svg width="32" height="24" viewBox="0 0 32 24" fill="none" stroke="#fff" strokeWidth="2">
              <path d="M2 7.500h4L13 1.500v21L6 17H2z" strokeLinejoin="round" />
              <path d="M19.500 7l10 10M29.500 7l-10 10" />
            </svg>
          </TrayIcon>
          <TrayIcon $w={53}>
            <svg width="34" height="22" viewBox="0 0 34 22">
              <rect x="1" y="1.500" width="27" height="18.500" rx="4" fill="none" stroke="#fff" strokeWidth="2" />
              <rect x="5" y="5" width="18.500" height="11.500" rx="1.500" fill="#fff" />
              <path d="M29 7h1.500q2.500 0 2.500 2.500v2.500q0 2.500-2.500 2.500H29z" fill="#fff" />
            </svg>
          </TrayIcon>
          <Clock>
            <div>3:39 PM</div>
            <div>4/7/2022</div>
          </Clock>
        </Tray>
      </TaskBar>
    </Screen>
  );
}
